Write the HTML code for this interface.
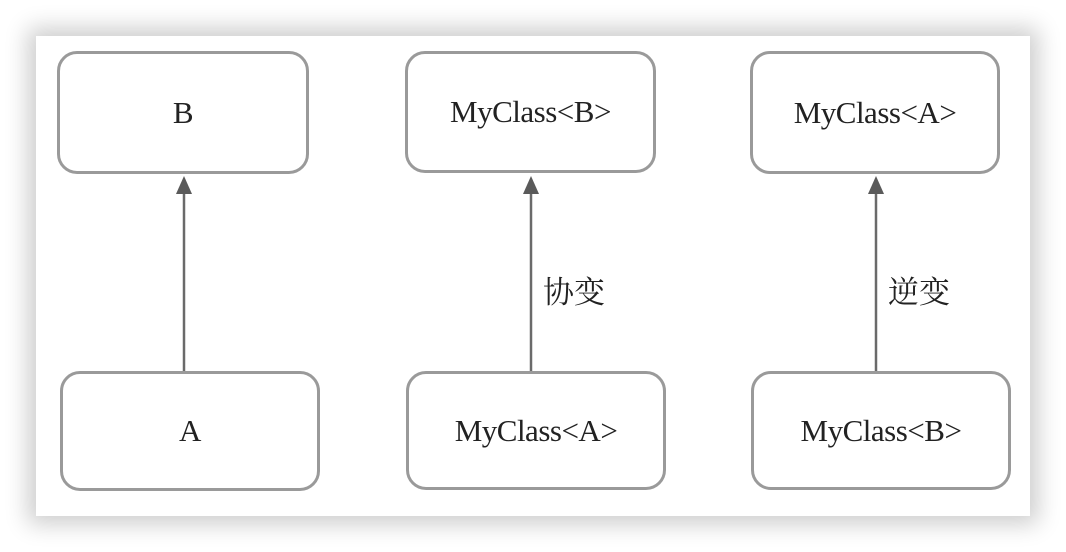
<!DOCTYPE html>
<html><head><meta charset="utf-8"><style>
body{margin:0;width:1066px;height:552px;background:#fff;overflow:hidden;position:relative;font-family:"Liberation Serif","Noto Serif CJK SC",serif;}
.panel{position:absolute;left:36px;top:36px;width:994px;height:480px;background:#fff;box-shadow:0 0 22px 8px rgba(0,0,0,0.2);}
.b{position:absolute;border:3px solid #9a9a9a;border-radius:20px;box-sizing:border-box;display:flex;align-items:center;justify-content:center;font-size:31px;color:#222;background:#fff;letter-spacing:-0.5px;}
.l{position:absolute;font-size:31px;color:#222;}
</style></head><body>
<div class="panel"></div>
<svg style="position:absolute;left:0;top:0" width="1066" height="552">
<g stroke="#6a6a6a" stroke-width="2.5"><line x1="184" y1="190" x2="184" y2="372"/><line x1="531" y1="190" x2="531" y2="372"/><line x1="876" y1="190" x2="876" y2="372"/></g>
<g fill="#5a5a5a"><polygon points="184,176 176,194 192,194"/><polygon points="531,176 523,194 539,194"/><polygon points="876,176 868,194 884,194"/></g>
</svg>
<div class="b" style="left:57px;top:51px;width:252px;height:123px">B</div>
<div class="b" style="left:405px;top:51px;width:251px;height:122px">MyClass&lt;B&gt;</div>
<div class="b" style="left:750px;top:51px;width:250px;height:123px">MyClass&lt;A&gt;</div>
<div class="b" style="left:60px;top:371px;width:260px;height:120px">A</div>
<div class="b" style="left:406px;top:371px;width:260px;height:119px">MyClass&lt;A&gt;</div>
<div class="b" style="left:751px;top:371px;width:260px;height:119px">MyClass&lt;B&gt;</div>
<div class="l" style="left:543px;top:267px">协变</div>
<div class="l" style="left:888px;top:267px">逆变</div>
</body></html>
